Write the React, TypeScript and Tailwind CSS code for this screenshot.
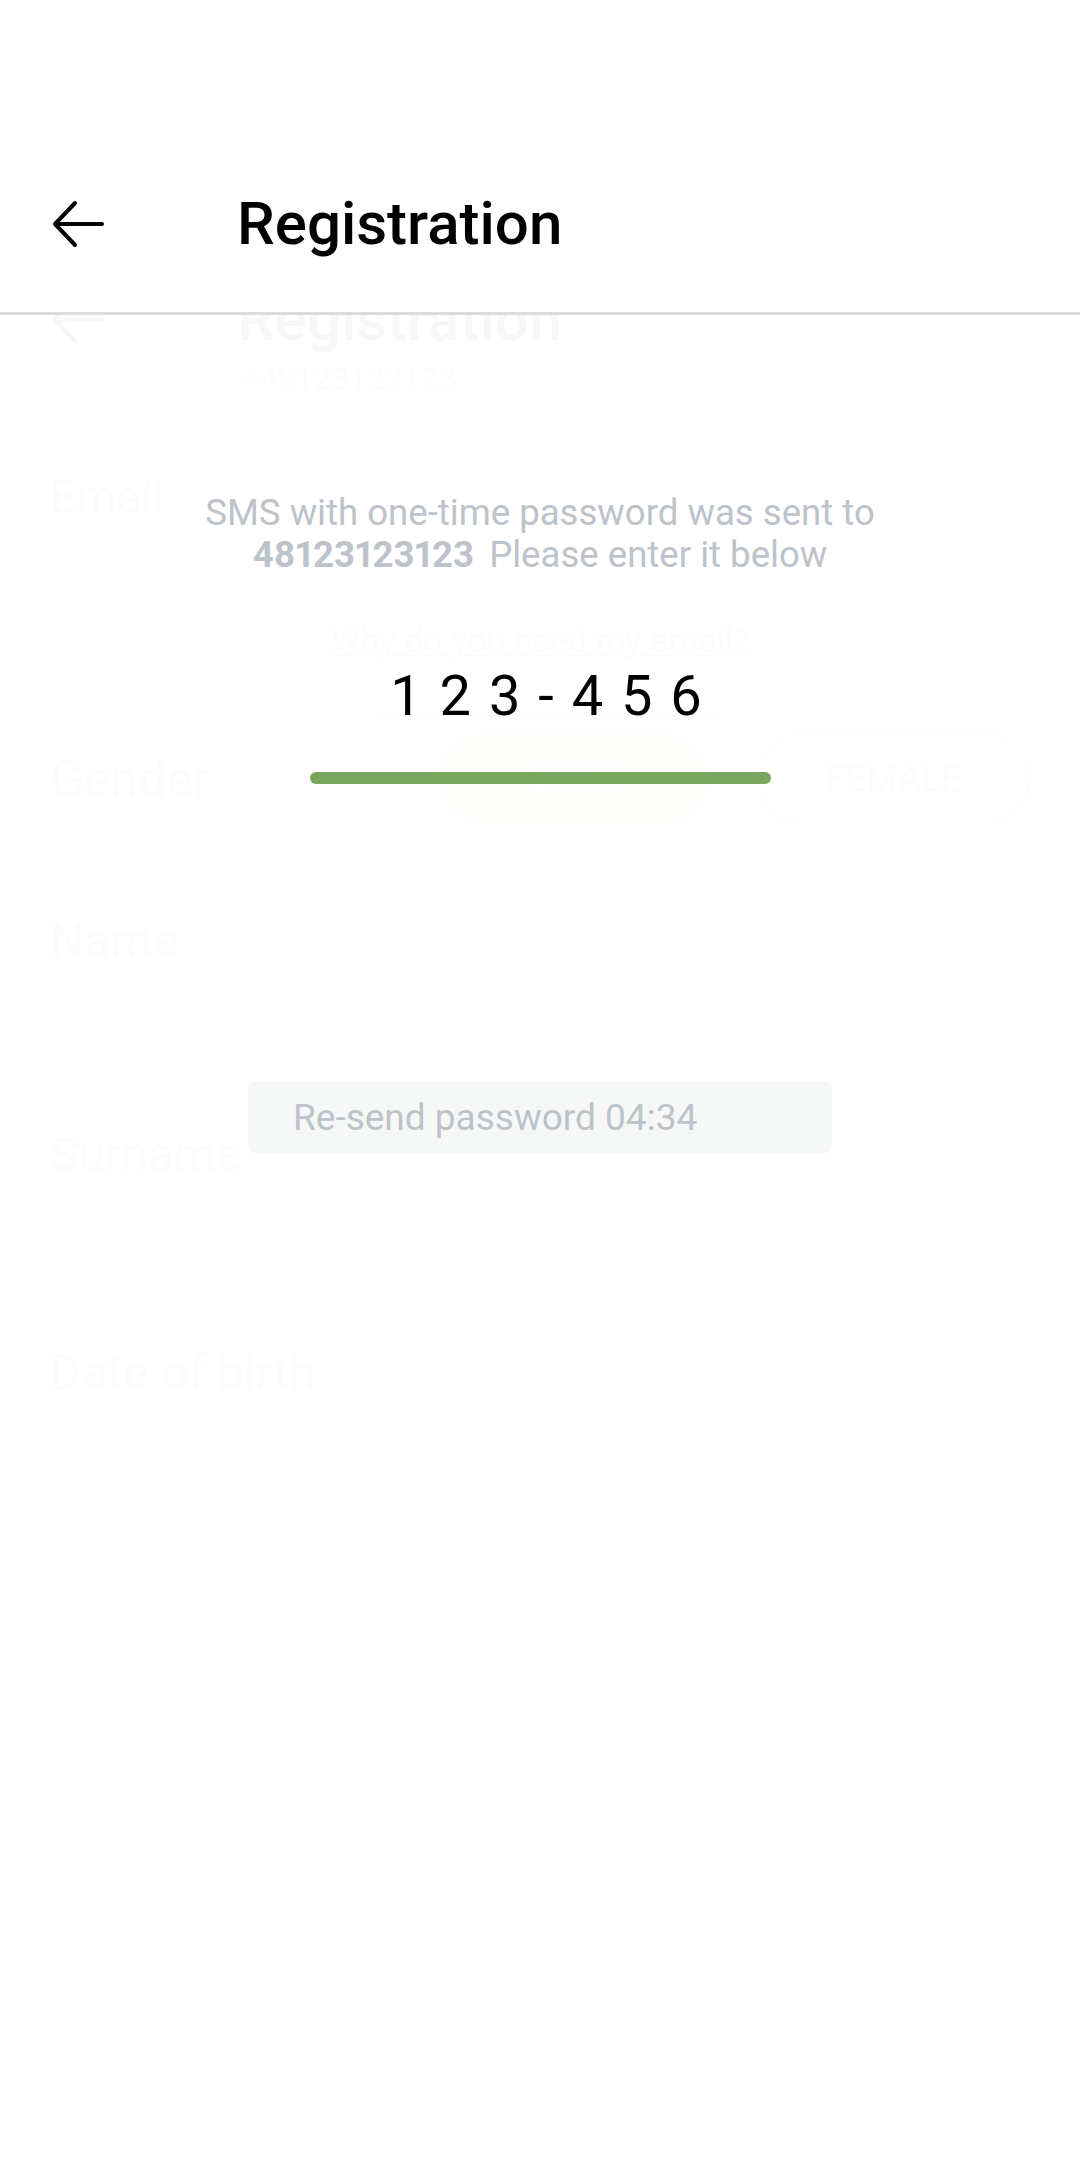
import React from 'react';

const BackArrow: React.FC<{ className?: string }> = ({ className }) => (
  <svg width="52" height="48" viewBox="0 0 52 48" fill="none" className={className}>
    <path d="M3 24H50M23 3L3 24L23 45" stroke="currentColor" strokeWidth="4" strokeLinecap="round" strokeLinejoin="round" />
  </svg>
);

// the registration form underneath, mostly washed out by the sheet on top
const GhostForm: React.FC = () => (
  <div className="pt-[96px] text-black">
    <div className="pt-[190px] h-[258px] flex items-center">
      <BackArrow className="ml-[52px] text-black" />
      <h1 className="ml-[133px] text-[60px] font-medium leading-none">Registration</h1>
    </div>
    <p className="ml-[241px] mt-[4px] text-[32px] leading-[40px] text-[#aaa]">+48123123123</p>
    <p className="ml-[50px] mt-[72px] text-[46px] leading-[54px] text-[#999]">Email</p>
    <p className="mt-[96px] text-center text-[34px] leading-[40px] text-[#999] underline">Why do you need my email?</p>
    <div className="ml-[370px] mt-[32px] w-[350px] border-b-2 border-[#bbb] h-[24px]" />
    <div className="mt-[16px] flex items-center h-[93px]">
      <p className="ml-[50px] w-[387px] text-[50px] leading-none text-[#999]">Gender</p>
      <div className="w-[272px] h-[93px] rounded-full bg-[#c9d88f] flex items-center justify-center text-[36px] text-white">MALE</div>
      <div className="ml-[48px] w-[273px] h-[93px] rounded-full border-2 border-[#bbb] flex items-center justify-center text-[36px] text-[#aaa]">FEMALE</div>
    </div>
    <p className="ml-[50px] mt-[88px] text-[48px] leading-[56px] text-[#999]">Name</p>
    <p className="ml-[50px] mt-[158px] text-[48px] leading-[56px] text-[#999]">Surname</p>
    <p className="ml-[50px] mt-[162px] text-[48px] leading-[56px] text-[#999]">Date of birth</p>
  </div>
);

export default function App() {
  return (
    <div className="relative w-[1080px] h-[2160px] overflow-hidden bg-white font-['Roboto','Liberation_Sans',sans-serif]">
      <GhostForm />

      <div className="absolute inset-0 flex flex-col">
        <header className="h-[315px] shrink-0 bg-white border-b-[3px] border-[#dcdcdc]">
          <div className="pt-[190px] h-[258px] flex items-center">
            <BackArrow className="ml-[52px] text-black" />
            <h1 className="ml-[133px] text-[60px] font-medium leading-none text-black">Registration</h1>
          </div>
        </header>

        <main className="flex-1 bg-white/[0.97] flex flex-col items-center">
          <p className="mt-[177px] text-center text-[36.6px] leading-[42px] text-[#bdc3ca]">
            SMS with one-time password was sent to
            <br />
            <span className="font-bold proportional-nums mr-[6px]">48123123123</span> Please enter it below
          </p>

          <p className="mt-[88px] pl-[14px] text-[56px] leading-[64px] tracking-[2px] text-black">1 2 3 - 4 5 6</p>

          <div className="mt-[44px] w-[461px] h-[12px] rounded-full bg-[#78a65d]" />

          <button className="mt-[298px] w-[584px] h-[71px] rounded-[6px] bg-[#f6f8f8] flex items-center pl-[45px] text-[37px] text-[#bdc3ca]">
            Re-send password 04:34
          </button>
        </main>
      </div>
    </div>
  );
}
